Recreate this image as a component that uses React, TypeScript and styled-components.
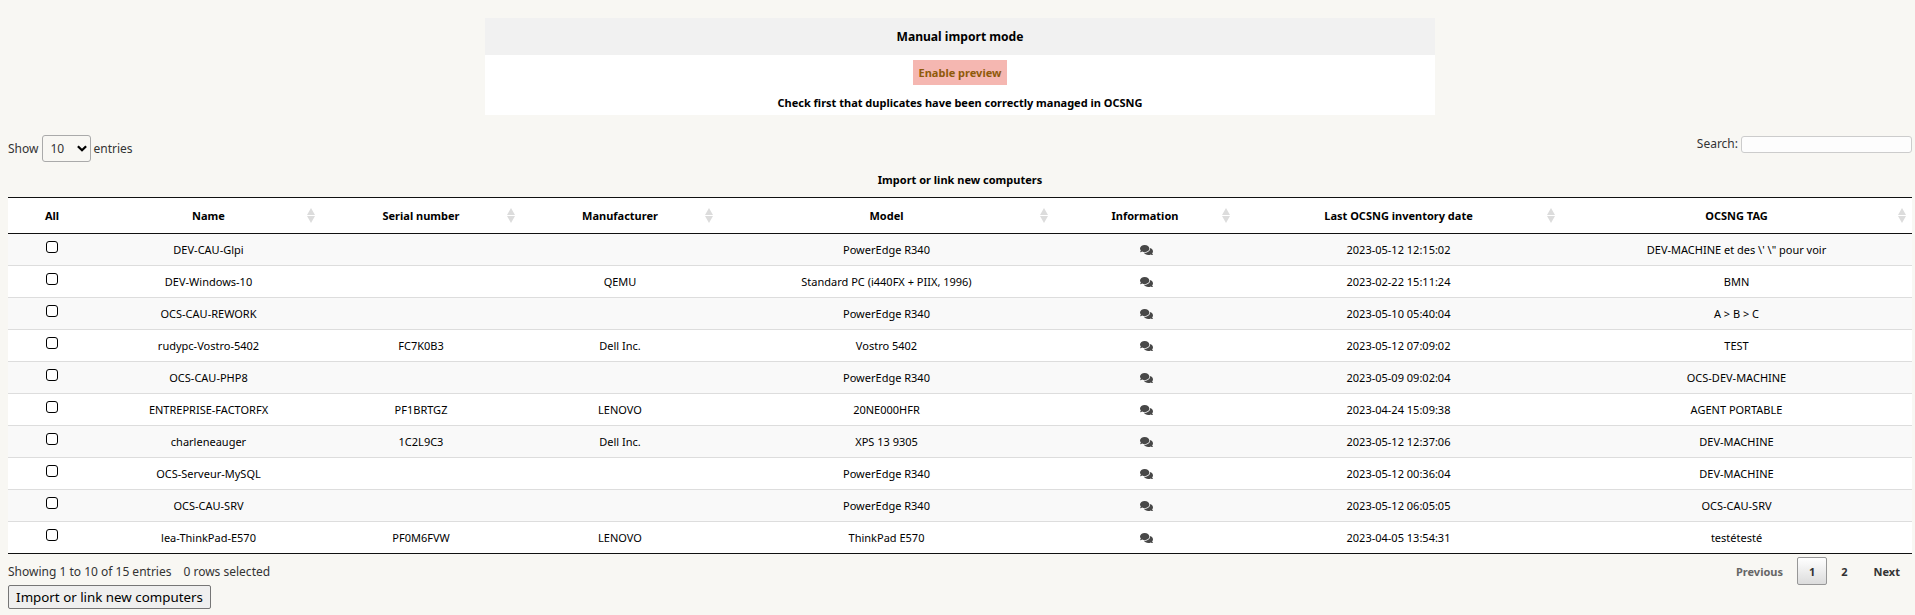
import React from "react";
import styled, { createGlobalStyle } from "styled-components";
import { FaComments } from "react-icons/fa";

const GlobalStyle = createGlobalStyle`
  *, *::before, *::after { box-sizing: border-box; }
  html { background: #f8f7f3; }
  body {
    margin: 0;
    background: #f8f7f3;
    color: #000;
    font-family: "Noto Sans", sans-serif;
    font-size: 12px;
    line-height: 16px;
  }
`;

const Page = styled.main`
  padding: 18px 3px 0 8px;
`;

const ModeCard = styled.section`
  width: 950px;
  height: 97px;
  margin: 0 auto;
  background: #fff;
  display: flex;
  flex-direction: column;
  align-items: center;
  font-size: 11px;
  font-weight: 700;
`;

const ModeTitle = styled.h2`
  width: 100%;
  height: 37px;
  margin: 0 0 5px;
  background: #f1f1f1;
  font-size: 12.1px;
  line-height: 37px;
  text-align: center;
`;

const PreviewLink = styled.a`
  height: 25px;
  padding: 0 6px;
  background: #f5b7b1;
  color: #8f5a0a;
  line-height: 26px;
  cursor: pointer;
`;

const Notice = styled.p`
  margin: 10px 0 0;
`;

const Toolbar = styled.div`
  display: flex;
  justify-content: space-between;
  align-items: flex-start;
  height: 37px;
  margin-top: 20px;
  color: #333;
`;

const LengthLabel = styled.label`
  display: flex;
  align-items: center;
  gap: 3px;
`;

const SelectBox = styled.span`
  display: inline-flex;
  position: relative;
  margin-left: 1px;
  margin-right: -1px;
`;

const LengthSelect = styled.select`
  appearance: none;
  width: 49px;
  height: 27px;
  padding: 0 7px;
  border: 1px solid #aaa;
  border-radius: 3px;
  background-color: transparent;
  color: #333;
  font: 12px "Noto Sans", sans-serif;
`;

const SelectArrow = styled.svg`
  position: absolute;
  top: 10px;
  right: 4px;
  width: 10px;
  height: 7px;
  fill: none;
  stroke: #000;
  stroke-width: 2.3;
  pointer-events: none;
`;

const SearchLabel = styled.label`
  display: flex;
  gap: 3px;
  margin-top: 1px;
`;

const SearchInput = styled.input`
  width: 171px;
  height: 17px;
  padding: 0 4px;
  border: 1px solid #ccc;
  border-radius: 3px;
  background: #fdfdfd;
  font: 11px "Noto Sans", sans-serif;
`;

const Table = styled.table`
  width: 1904px;
  table-layout: fixed;
  border-collapse: separate;
  border-spacing: 0;
  border-bottom: 1px solid #111;
  font-size: 11px;
  line-height: 16px;
`;

const Caption = styled.caption`
  height: 25px;
  padding-bottom: 9px;
  font-weight: 700;
`;

const HeadCell = styled.th`
  height: 37px;
  padding: 0 10px;
  border-top: 1px solid #111;
  border-bottom: 1px solid #111;
  background: #fff;
`;

const HeadContent = styled.div<{ $sortable: boolean }>`
  display: grid;
  grid-template-columns: ${(p) => (p.$sortable ? "1fr auto 1fr" : "1fr")};
  align-items: center;
  margin: 0 ${(p) => (p.$sortable ? "-4px" : "0")};
`;

const SortIcon = styled.svg`
  width: 8px;
  height: 15px;
  justify-self: end;
  fill: #dcdcdc;
`;

const Row = styled.tr`
  background: #fff;
  &:nth-child(odd) { background: #f9f9f9; }
  &:last-child td { height: 31px; border-bottom: 0; }
`;

const Cell = styled.td`
  height: 32px;
  padding: 0;
  border-bottom: 1px solid #ddd;
  text-align: center;
`;

const CheckCell = styled(Cell)`
  padding: 0 0 6px;
  line-height: 0;
`;

const Checkbox = styled.input`
  appearance: none;
  width: 12px;
  height: 12px;
  margin: 0;
  border: 1px solid #000;
  border-radius: 3px;
  background: #fff;
`;

const CommentIcon = styled(FaComments)`
  display: block;
  width: 13px;
  height: 12px;
  margin: 0 auto;
  transform: translateX(1px);
  color: #484848;
`;

const Footer = styled.div`
  display: flex;
  justify-content: space-between;
  height: 31px;
  padding-top: 3px;
  color: #333;
`;

const Summary = styled.div`
  display: flex;
  gap: 12px;
  padding-top: 7px;
`;

const Pagination = styled.nav`
  display: flex;
  gap: 2px;
  font-size: 11px;
`;

const PageButton = styled.button<{ $current?: boolean }>`
  height: 28px;
  min-width: 30px;
  padding: 0 11px;
  border: 1px solid ${(p) => (p.$current ? "#979797" : "transparent")};
  border-radius: 2px;
  background: ${(p) => (p.$current ? "linear-gradient(#fff, #dcdcdc)" : "transparent")};
  color: #333;
  font: 700 11px "Noto Sans", sans-serif;
  &:disabled { color: #666; }
`;

const ImportButton = styled.button`
  display: block;
  width: 203px;
  height: 24px;
  padding: 0;
  border: 1px solid #767676;
  border-radius: 2px;
  background: #efefef;
  color: #000;
  font: 13.333px "Noto Sans", sans-serif;
`;

const columns = [
  { label: "All", width: 88 },
  { label: "Name", width: 225 },
  { label: "Serial number", width: 200 },
  { label: "Manufacturer", width: 198 },
  { label: "Model", width: 335 },
  { label: "Information", width: 182 },
  { label: "Last OCSNG inventory date", width: 325 },
  { label: "OCSNG TAG", width: 351 },
];

const computers = [
  ["DEV-CAU-Glpi", "", "", "PowerEdge R340", "2023-05-12 12:15:02", "DEV-MACHINE et des \\' \\\" pour voir"],
  ["DEV-Windows-10", "", "QEMU", "Standard PC (i440FX + PIIX, 1996)", "2023-02-22 15:11:24", "BMN"],
  ["OCS-CAU-REWORK", "", "", "PowerEdge R340", "2023-05-10 05:40:04", "A > B > C"],
  ["rudypc-Vostro-5402", "FC7K0B3", "Dell Inc.", "Vostro 5402", "2023-05-12 07:09:02", "TEST"],
  ["OCS-CAU-PHP8", "", "", "PowerEdge R340", "2023-05-09 09:02:04", "OCS-DEV-MACHINE"],
  ["ENTREPRISE-FACTORFX", "PF1BRTGZ", "LENOVO", "20NE000HFR", "2023-04-24 15:09:38", "AGENT PORTABLE"],
  ["charleneauger", "1C2L9C3", "Dell Inc.", "XPS 13 9305", "2023-05-12 12:37:06", "DEV-MACHINE"],
  ["OCS-Serveur-MySQL", "", "", "PowerEdge R340", "2023-05-12 00:36:04", "DEV-MACHINE"],
  ["OCS-CAU-SRV", "", "", "PowerEdge R340", "2023-05-12 06:05:05", "OCS-CAU-SRV"],
  ["lea-ThinkPad-E570", "PF0M6FVW", "LENOVO", "ThinkPad E570", "2023-04-05 13:54:31", "testétesté"],
];

export default function App() {
  return (
    <>
      <GlobalStyle />
      <Page>
        <ModeCard>
          <ModeTitle>Manual import mode</ModeTitle>
          <PreviewLink>Enable preview</PreviewLink>
          <Notice>Check first that duplicates have been correctly managed in OCSNG</Notice>
        </ModeCard>
        <Toolbar>
          <LengthLabel>
            Show
            <SelectBox>
              <LengthSelect defaultValue="10">
                <option>10</option>
              </LengthSelect>
              <SelectArrow viewBox="0 0 10 7">
                <path d="M0.9 1.2L5 5.2L9.1 1.2" />
              </SelectArrow>
            </SelectBox>
            entries
          </LengthLabel>
          <SearchLabel>
            Search:
            <SearchInput type="search" />
          </SearchLabel>
        </Toolbar>
        <Table>
          <Caption>Import or link new computers</Caption>
          <colgroup>
            {columns.map((c) => (
              <col key={c.label} width={c.width} />
            ))}
          </colgroup>
          <thead>
            <tr>
              {columns.map((c, i) => (
                <HeadCell key={c.label}>
                  <HeadContent $sortable={i > 0}>
                    {i > 0 && <span />}
                    <span>{c.label}</span>
                    {i > 0 && (
                      <SortIcon viewBox="0 0 8 15">
                        <path d="M4 0L8 7H0ZM0 8H8L4 15Z" />
                      </SortIcon>
                    )}
                  </HeadContent>
                </HeadCell>
              ))}
            </tr>
          </thead>
          <tbody>
            {computers.map(([name, serial, maker, model, date, tag]) => (
              <Row key={name}>
                <CheckCell>
                  <Checkbox type="checkbox" aria-label={name} />
                </CheckCell>
                <Cell>{name}</Cell>
                <Cell>{serial}</Cell>
                <Cell>{maker}</Cell>
                <Cell>{model}</Cell>
                <Cell>
                  <CommentIcon />
                </Cell>
                <Cell>{date}</Cell>
                <Cell>{tag}</Cell>
              </Row>
            ))}
          </tbody>
        </Table>
        <Footer>
          <Summary>
            <span>Showing 1 to 10 of 15 entries</span>
            <span>0 rows selected</span>
          </Summary>
          <Pagination>
            <PageButton disabled>Previous</PageButton>
            <PageButton $current>1</PageButton>
            <PageButton>2</PageButton>
            <PageButton>Next</PageButton>
          </Pagination>
        </Footer>
        <ImportButton>Import or link new computers</ImportButton>
      </Page>
    </>
  );
}
